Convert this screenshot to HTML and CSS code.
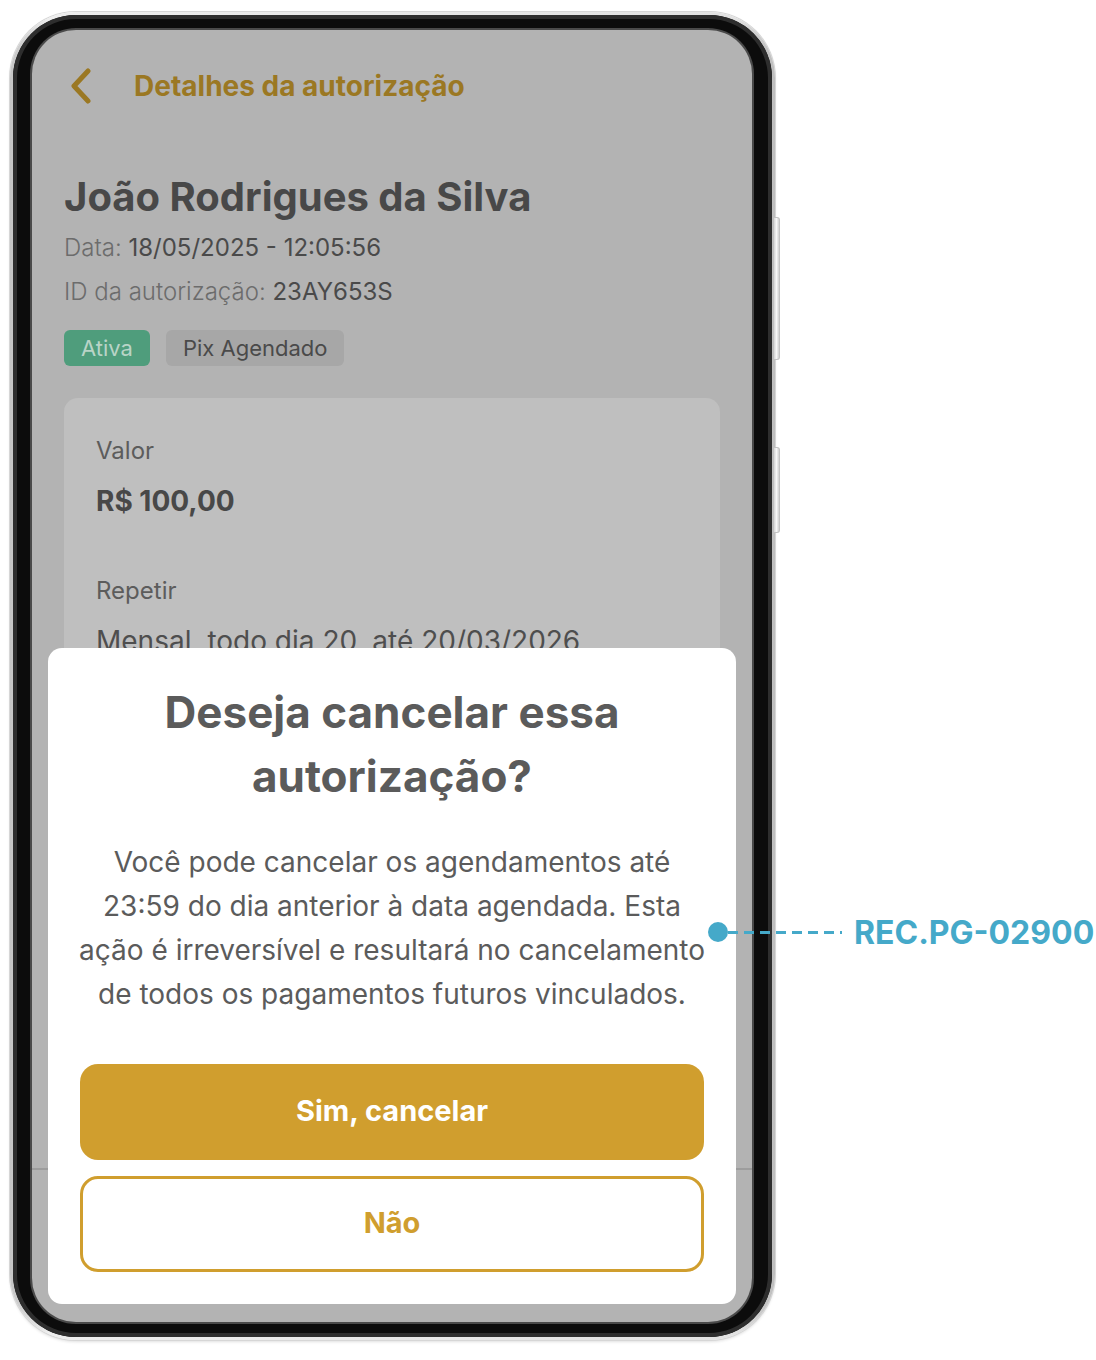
FILE: index.html
```html
<!DOCTYPE html>
<html lang="pt-BR">
<head>
  <meta charset="UTF-8" />
  <meta name="viewport" content="width=device-width, initial-scale=1.0" />
  <title>Detalhes da autorização</title>
  <link rel="stylesheet" href="styles.css">
</head>
<body>
  <div class="stage">
    <div class="phone">
      <span class="side-key key-top"></span>
      <span class="side-key key-bottom"></span>
      <div class="bezel">
        <div class="screen">
          <header class="topbar">
            <svg class="back" width="22" height="36" viewBox="0 0 22 36">
              <path d="M18 3 L4 18 L18 33" fill="none" stroke="currentColor" stroke-width="5" stroke-linecap="round" stroke-linejoin="round"/>
            </svg>
            <h1>Detalhes da autorização</h1>
          </header>

          <main class="details">
            <h2 class="name">João Rodrigues da Silva</h2>
            <p class="meta"><span class="label">Data:</span> 18/05/2025 - 12:05:56</p>
            <p class="meta"><span class="label">ID da autorização:</span> 23AY653S</p>
            <div class="tags">
              <span class="tag tag-active">Ativa</span>
              <span class="tag">Pix Agendado</span>
            </div>

            <section class="card">
              <p class="field-label">Valor</p>
              <p class="field-value strong">R$ 100,00</p>
              <p class="field-label spaced">Repetir</p>
              <p class="field-value">Mensal, todo dia 20, até 20/03/2026</p>
            </section>
          </main>

          <footer class="bottom-bar"></footer>

          <!-- dialog de confirmação -->
          <div class="sheet">
            <h3>Deseja cancelar essa autorização?</h3>
            <p class="sheet-text">Você pode cancelar os agendamentos até<br>23:59 do dia anterior à data agendada. Esta<br>ação é irreversível e resultará no cancelamento<br>de todos os pagamentos futuros vinculados.</p>
            <div class="actions">
              <button class="btn btn-primary">Sim, cancelar</button>
              <button class="btn btn-outline">Não</button>
            </div>
          </div>
        </div>
      </div>
    </div>

    <div class="annotation">
      <span class="dot"></span>
      <span class="dash"></span>
      <span class="code">REC.PG-02900</span>
    </div>
  </div>
</body>
</html>
```

FILE: styles.css
```css
:root {
  --gold: #d09e2e;
  --gold-dim: #9b7823;
  --screen-bg: #b3b3b3;
  --card-bg: #bfbfbf;
  --ink: #484848;
  --annot: #45a9c9;
}

* {
  box-sizing: border-box;
}

body {
  margin: 0;
  background: #fff;
  font-family: Inter, "Noto Sans", sans-serif;
}

.stage {
  position: relative;
  width: 1096px;
  height: 1360px;
  padding: 12px 0 0 10px;
}

/* phone mockup */
.phone {
  position: relative;
  width: 765px;
  height: 1328px;
  padding: 3px;
  border-radius: 66px;
  background: linear-gradient(90deg, #c4c4c4, #eeeeee 5%, #e2e2e2 95%, #bdbdbd);
  box-shadow: 0 0 0 1px #d6d6d6, 0 2px 3px rgba(0, 0, 0, 0.12);
}

.side-key {
  position: absolute;
  right: -5px;
  width: 6px;
  border-radius: 0 3px 3px 0;
  border: 1px solid #c2c2c2;
  border-left: none;
  background: linear-gradient(90deg, #d4d4d4, #f7f7f7, #cfcfcf);
}

.key-top {
  top: 205px;
  height: 143px;
}

.key-bottom {
  top: 435px;
  height: 86px;
}

.bezel {
  height: 100%;
  padding: 15px 20px 15px 19px;
  border-radius: 63px;
  background: #0c0c0c;
  box-shadow: inset 0 0 0 4px #2e2e2e;
}

.screen {
  position: relative;
  height: 100%;
  display: flex;
  flex-direction: column;
  border-radius: 44px;
  background: var(--screen-bg);
  overflow: hidden;
  box-shadow: 0 0 0 2px #4a4a4a;
}

.topbar {
  height: 112px;
  display: flex;
  align-items: center;
  gap: 42px;
  padding: 0 0 0 38px;
  color: var(--gold-dim);
}

.topbar h1 {
  margin: 0;
  font-size: 28px;
  font-weight: 700;
}

.details {
  flex: 1;
  padding: 0 32px;
}

.name {
  margin: 32px 0 0;
  font-size: 40px;
  line-height: 46px;
  font-weight: 700;
  color: var(--ink);
}

.meta {
  margin: 12px 0 0;
  font-size: 24px;
  line-height: 32px;
  color: #4a4a4a;
}

.meta .label {
  color: #6c6c6c;
  font-weight: 300;
}

.tags {
  display: flex;
  gap: 16px;
  margin-top: 22px;
}

.tag {
  height: 36px;
  padding: 0 17px;
  display: flex;
  align-items: center;
  border-radius: 6px;
  background: #a7a7a7;
  color: #4a4a4a;
  font-size: 22px;
}

.tag-active {
  background: #4f9d7c;
  color: #b9d4c7;
}

.card {
  margin-top: 32px;
  padding: 38px 32px 120px;
  border-radius: 14px;
  background: var(--card-bg);
}

.card p {
  margin: 0;
}

.field-label {
  font-size: 24px;
  line-height: 30px;
  color: #5c5c5c;
}

.field-label.spaced {
  margin-top: 57px;
}

.field-value {
  margin-top: 17px !important;
  font-size: 28px;
  line-height: 36px;
  color: #4e4e4e;
}

.field-value.strong {
  font-size: 28px;
  font-weight: 700;
  color: var(--ink);
}

.bottom-bar {
  height: 154px;
  border-top: 2px solid #9d9d9d;
}

/* modal */
.sheet {
  position: absolute;
  left: 16px;
  right: 16px;
  bottom: 18px;
  padding: 32px;
  border-radius: 14px;
  background: #fff;
  text-align: center;
}

.sheet h3 {
  margin: 0;
  padding: 0 40px;
  font-size: 44px;
  line-height: 64px;
  font-weight: 700;
  color: #5b5b5b;
}

.sheet-text {
  margin: 32px -16px 0;
  font-size: 28px;
  line-height: 44px;
  color: #5b5b5b;
}

.actions {
  display: flex;
  flex-direction: column;
  gap: 16px;
  margin-top: 48px;
}

.btn {
  height: 96px;
  padding: 0 0 3px;
  border-radius: 18px;
  font-family: inherit;
  font-size: 29px;
  font-weight: 700;
}

.btn-primary {
  border: none;
  background: var(--gold);
  color: #fff;
}

.btn-outline {
  border: 3px solid var(--gold);
  background: #fff;
  color: var(--gold);
}

/* annotation marker */
.annotation {
  position: absolute;
  left: 708px;
  top: 912px;
  height: 40px;
  display: flex;
  align-items: center;
}

.dot {
  width: 20px;
  height: 20px;
  border-radius: 50%;
  background: var(--annot);
}

.dash {
  width: 114px;
  height: 3px;
  background: repeating-linear-gradient(90deg, var(--annot) 0 10px, transparent 10px 16px);
}

.code {
  margin-left: 12px;
  font-size: 32px;
  font-weight: 700;
  color: var(--annot);
}
```
